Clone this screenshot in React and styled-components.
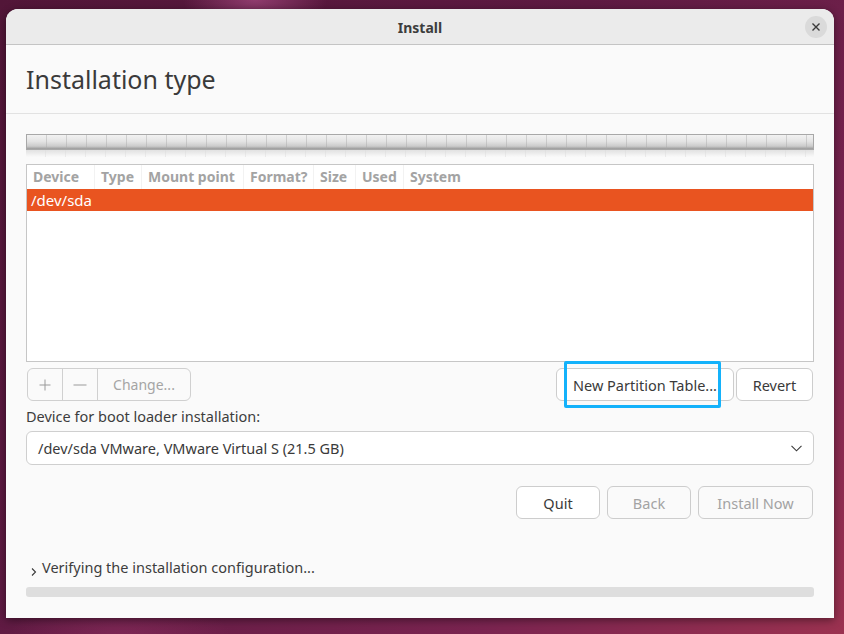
import styled, { createGlobalStyle } from "styled-components";

const Global = createGlobalStyle`
  html, body {
    margin: 0;
    padding: 0;
  }
  body {
    font-family: "Noto Sans", "Liberation Sans", sans-serif;
    color: #3d3d3d;
  }
`;

const Desktop = styled.div`
  width: 844px;
  height: 634px;
  overflow: hidden;
  box-sizing: border-box;
  padding: 9px 10px 0 6px;
  background:
    radial-gradient(ellipse 90px 40px at 255px 0px, rgba(190, 90, 150, 0.55), transparent 80%),
    radial-gradient(ellipse 140px 60px at 120px 640px, rgba(150, 50, 100, 0.5), transparent 80%),
    linear-gradient(135deg, #521638 0%, #5e1a42 40%, #7a2450 75%, #9b3250 100%);
`;

const Window = styled.div`
  width: 828px;
  height: 609px;
  background: #fafafa;
  border-radius: 12px 12px 0 0;
  box-shadow: 0 2px 8px rgba(0, 0, 0, 0.45);
  display: flex;
  flex-direction: column;
  overflow: hidden;
`;

const TitleBar = styled.div`
  flex: none;
  height: 36px;
  box-sizing: border-box;
  padding-top: 1px;
  background: #ebebeb;
  border-bottom: 1px solid #c4c4c4;
  display: flex;
  align-items: center;
  justify-content: center;
  position: relative;
  font-size: 14px;
  font-weight: 700;
  color: #3d3d3d;
`;

const CloseBtn = styled.div`
  position: absolute;
  right: 7px;
  top: 7px;
  width: 22px;
  height: 22px;
  border-radius: 50%;
  background: #dadada;
  display: flex;
  align-items: center;
  justify-content: center;
`;

const Header = styled.div`
  height: 68px;
  flex: none;
  border-bottom: 1px solid #e2e2e2;
  display: flex;
  align-items: center;
  padding-left: 20px;
  font-size: 25px;
  color: #3a3a3a;
`;

const Content = styled.div`
  padding: 20px 20px 0 20px;
  display: flex;
  flex-direction: column;
`;

const PartBar = styled.div`
  height: 14px;
  border: 1px solid #a8a8a8;
  background:
    repeating-linear-gradient(90deg, transparent 0 19px, rgba(170, 170, 170, 0.45) 19px 20px),
    linear-gradient(#f2f2f2 0%, #e4e4e4 45%, #cbcbcb 80%, #9a9a9a 100%);
`;

const Reflection = styled.div`
  height: 7px;
  background:
    repeating-linear-gradient(90deg, transparent 0 19px, rgba(210, 210, 210, 0.45) 19px 20px),
    linear-gradient(#dcdcdc, #fafafa);
  opacity: 0.8;
`;

const Table = styled.div`
  margin-top: 7px;
  height: 196px;
  border: 1px solid #c6c6c6;
  background: #ffffff;
`;

const HeadRow = styled.div`
  display: flex;
  height: 24px;
  align-items: center;
`;

const HeadCell = styled.div`
  width: ${(p) => p.$w}px;
  flex: none;
  box-sizing: border-box;
  padding-left: 6px;
  font-size: 14px;
  font-weight: 700;
  color: #a3a3a3;
  border-right: ${(p) => (p.$last ? "none" : "1px solid #f2f2f2")};
  height: 24px;
  line-height: 24px;
`;

const SelRow = styled.div`
  height: 22px;
  background: #e95420;
  color: #ffffff;
  font-size: 15px;
  line-height: 22px;
  padding-left: 4px;
`;

const Toolbar = styled.div`
  margin-top: 6px;
  display: flex;
  align-items: center;
  padding-right: 1px;
`;

const Group = styled.div`
  display: flex;
  height: 31px;
  border: 1px solid #d0d0d0;
  border-radius: 6px;
  background: #fafafa;
  margin-left: 1px;
`;

const GroupCell = styled.div`
  width: ${(p) => p.$w}px;
  box-sizing: border-box;
  border-left: ${(p) => (p.$first ? "none" : "1px solid #d0d0d0")};
  display: flex;
  align-items: center;
  justify-content: center;
  color: #a5a5a5;
  font-size: 14px;
`;

const Spacer = styled.div`
  flex: 1;
`;

const Button = styled.div`
  position: relative;
  height: 31px;
  width: ${(p) => p.$w}px;
  box-sizing: content-box;
  border: 1px solid #cdcdcd;
  border-radius: 6px;
  background: ${(p) => (p.$disabled ? "#fafafa" : "#ffffff")};
  color: ${(p) => (p.$disabled ? "#a3a3a3" : "#3a3a3a")};
  font-size: 14.5px;
  display: flex;
  align-items: center;
  justify-content: center;
  margin-left: ${(p) => p.$ml || 0}px;
`;

const Highlight = styled.div`
  position: absolute;
  left: 7px;
  right: 12px;
  top: -8px;
  bottom: -8px;
  border: 3px solid #14b2fb;
  border-radius: 2px;
  pointer-events: none;
`;

const Label = styled.div`
  margin-top: 5px;
  font-size: 14.5px;
  line-height: 20px;
  color: #3d3d3d;
`;

const Combo = styled.div`
  margin-top: 5px;
  height: 32px;
  border: 1px solid #cfcfcf;
  border-radius: 6px;
  background: #ffffff;
  display: flex;
  align-items: center;
  padding: 0 11px 0 11px;
  font-size: 14.5px;
  color: #3a3a3a;
`;

const Actions = styled.div`
  margin-top: 21px;
  display: flex;
  justify-content: flex-end;
  padding-right: 1px;
`;

const Expander = styled.div`
  margin-top: 38px;
  display: flex;
  align-items: flex-end;
  font-size: 14.5px;
  line-height: 20px;
  color: #3d3d3d;
  height: 20px;
`;

const Arrow = styled.svg`
  margin: 0 5px 0 5px;
  flex: none;
`;

const Progress = styled.div`
  margin-top: 10px;
  height: 10px;
  border-radius: 3px;
  background: #dedede;
`;

const columns = [
  ["Device", 68],
  ["Type", 47],
  ["Mount point", 102],
  ["Format?", 70],
  ["Size", 42],
  ["Used", 48],
  ["System", 120],
];

export default function App() {
  return (
    <>
      <Global />
      <Desktop>
        <Window>
          <TitleBar>
            Install
            <CloseBtn>
              <svg width="10" height="10" viewBox="0 0 10 10">
                <path d="M1.5 1.5 L8.5 8.5 M8.5 1.5 L1.5 8.5" stroke="#3a3a3a" strokeWidth="1.4" />
              </svg>
            </CloseBtn>
          </TitleBar>
          <Header>Installation type</Header>
          <Content>
            <PartBar />
            <Reflection />
            <Table>
              <HeadRow>
                {columns.map(([name, w], i) => (
                  <HeadCell key={name} $w={w} $last={i === columns.length - 1}>
                    {name}
                  </HeadCell>
                ))}
              </HeadRow>
              <SelRow>/dev/sda</SelRow>
            </Table>
            <Toolbar>
              <Group>
                <GroupCell $w={34} $first>
                  <svg width="12" height="12" viewBox="0 0 12 12">
                    <path d="M6 0.5 V11.5 M0.5 6 H11.5" stroke="#9a9a9a" strokeWidth="1" />
                  </svg>
                </GroupCell>
                <GroupCell $w={35}>
                  <svg width="14" height="12" viewBox="0 0 14 12">
                    <path d="M0.5 6 H13.5" stroke="#9a9a9a" strokeWidth="1" />
                  </svg>
                </GroupCell>
                <GroupCell $w={93}>Change...</GroupCell>
              </Group>
              <Spacer />
              <Button $w={176}>
                New Partition Table...
                <Highlight />
              </Button>
              <Button $w={75} $ml={2}>Revert</Button>
            </Toolbar>
            <Label>Device for boot loader installation:</Label>
            <Combo>
              <span>/dev/sda VMware, VMware Virtual S (21.5 GB)</span>
              <Spacer />
              <svg width="11" height="7" viewBox="0 0 11 7">
                <path d="M0.5 0.8 L5.5 5.8 L10.5 0.8" stroke="#3a3a3a" strokeWidth="1.1" fill="none" />
              </svg>
            </Combo>
            <Actions>
              <Button $w={82}>Quit</Button>
              <Button $w={82} $ml={7} $disabled>Back</Button>
              <Button $w={113} $ml={7} $disabled>Install Now</Button>
            </Actions>
            <Expander>
              <Arrow width="6" height="10" viewBox="0 0 6 10">
                <path d="M1 1.5 L4.5 5 L1 8.5" stroke="#3a3a3a" strokeWidth="1.1" fill="none" />
              </Arrow>
              <span>Verifying the installation configuration...</span>
            </Expander>
            <Progress />
          </Content>
        </Window>
      </Desktop>
    </>
  );
}
